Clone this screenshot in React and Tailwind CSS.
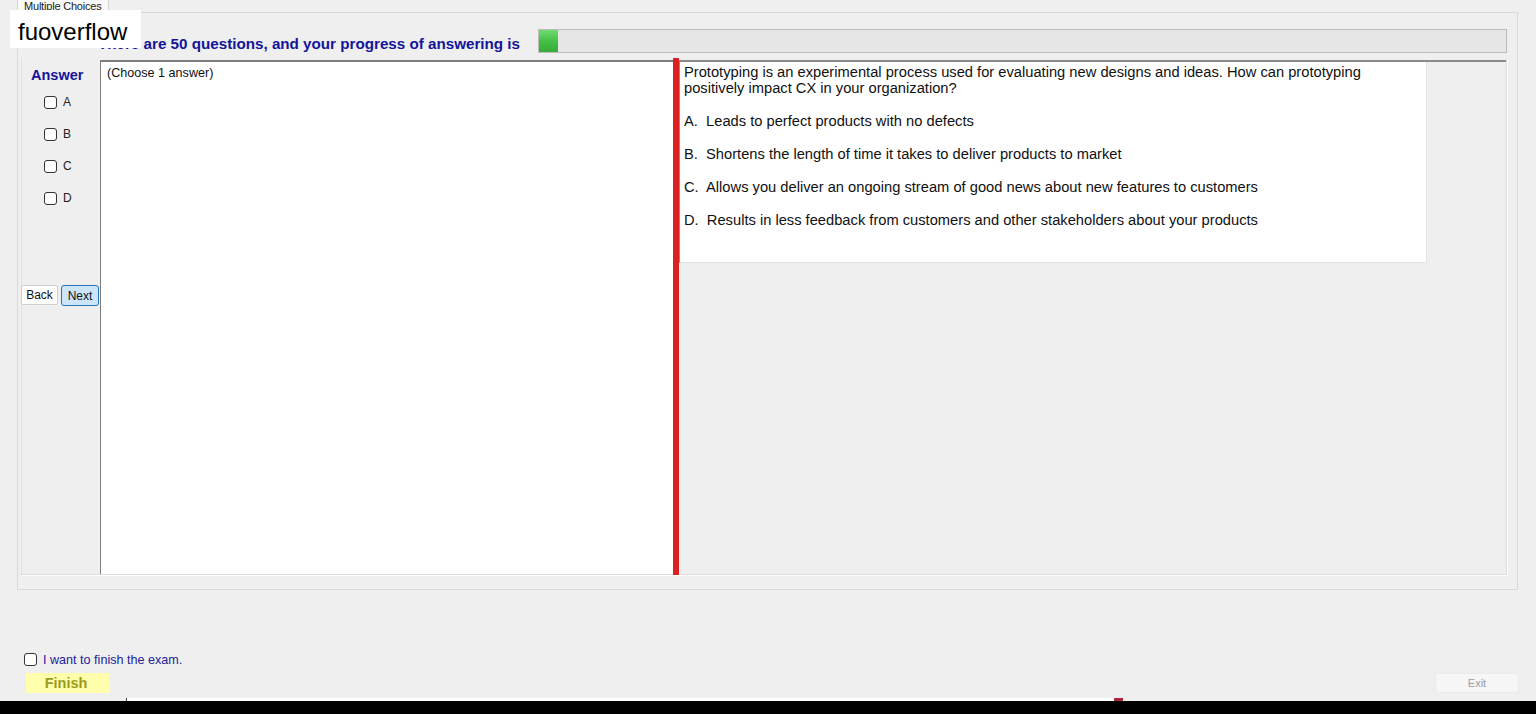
import React from "react";

const sans = { fontFamily: '"Liberation Sans", Arial, sans-serif' };

function Box({ className = "" }) {
  return (
    <div
      className={
        "w-[13px] h-[13px] shrink-0 rounded-[3px] border border-[#333333] bg-white " +
        className
      }
    />
  );
}

const options = [
  "A.  Leads to perfect products with no defects",
  "B.  Shortens the length of time it takes to deliver products to market",
  "C.  Allows you deliver an ongoing stream of good news about new features to customers",
  "D.  Results in less feedback from customers and other stakeholders about your products",
];

export default function App() {
  return (
    <div
      className="relative w-[1536px] h-[714px] overflow-hidden bg-[#efefef] flex flex-col text-black"
      style={sans}
    >
      {/* tab strip */}
      <div className="h-[12px] flex pl-[17px]">
        <div className="w-[92px] h-[13px] bg-[#f9f9f9] border border-t-0 border-b-0 border-[#d4d4d4] text-[11px] leading-[12px] text-[#222] pl-[6px] tracking-[-0.2px] whitespace-nowrap">
          Multiple Choices
        </div>
      </div>

      {/* tab page */}
      <div className="ml-[17px] w-[1501px] h-[578px] border border-[#d9d9d9] flex flex-col">
        {/* progress header */}
        <div className="mt-[16px] h-[24px] flex items-center">
          <div className="pl-[80px] w-[520px] text-[15.2px] font-bold text-[#14149a] pt-[6px] leading-[16px] whitespace-nowrap">
            There are 50 questions, and your progress of answering is
          </div>
          <div className="w-[969px] h-[24px] border border-[#bcbcbc] bg-[#e6e6e6] flex">
            <div className="w-[19px] h-full bg-gradient-to-b from-[#6fdc6f] via-[#45bf45] to-[#37ad37]" />
          </div>
        </div>

        {/* question frame */}
        <div className="mt-[5px] ml-[3px] w-[1486px] h-[517px] flex border-r border-b border-[#dcdcdc] shadow-[1px_1px_0_#ffffff]">
          {/* answer column */}
          <div className="w-[79px] shrink-0 flex flex-col border-l border-[#e2e2e2]">
            <div className="pl-[9px] pt-[9px] text-[14.5px] leading-[16px] font-bold text-[#14149a]">
              Answer
            </div>
            <div className="mt-[13px] pl-[22px] flex flex-col">
              {["A", "B", "C", "D"].map((l) => (
                <div key={l} className="h-[32px] flex items-start gap-[6px]">
                  <Box />
                  <span className="text-[12px] leading-[13px] text-[#222]">{l}</span>
                </div>
              ))}
            </div>
            <div className="mt-[61px] flex gap-[3px] -ml-[1px]">
              <div className="w-[37px] h-[20px] bg-white border border-[#d0d0d0] rounded-[2px] text-[12px] flex items-center justify-center text-[#111]">
                Back
              </div>
              <div className="w-[38px] h-[21px] bg-[#cde5f8] border border-[#2c73b8] rounded-[3px] text-[12px] flex items-center justify-center text-[#111]">
                Next
              </div>
            </div>
          </div>

          {/* choose panel */}
          <div className="mt-[2px] w-[573px] h-[514px] bg-white border-l border-t-2 border-[#7c7c7c] pl-[6px] pt-[4px] text-[12.6px] leading-[14px] text-[#111]">
            (Choose 1 answer)
          </div>

          {/* splitter */}
          <div className="w-[6px] h-[517px] bg-[#dc1f1f]" />

          {/* question panel */}
          <div className="mt-[2px] flex-1 border-t-2 border-[#8a8a8a] flex flex-col">
            <div className="w-[748px] h-[201px] bg-white border-l border-[#8a8a8a] border-r border-b border-r-[#e4e4e4] border-b-[#e4e4e4] pl-[4px] pt-[2px] text-[14.7px] leading-[16.5px] text-[#111]">
              <div className="leading-[16px]">
                Prototyping is an experimental process used for evaluating new designs and ideas. How can prototyping
                <br />
                positively impact CX in your organization?
              </div>
              {options.map((o) => (
                <div key={o} className="mt-[16.5px] whitespace-pre">
                  {o}
                </div>
              ))}
            </div>
          </div>
        </div>
      </div>

      {/* finish area */}
      <div className="mt-[61px] pl-[24px] flex items-center gap-[6px]">
        <Box />
        <span className="text-[12.6px] leading-[14px] text-[#22229a] pt-[2px]">I want to finish the exam.</span>
      </div>
      <div className="mt-[6px] flex justify-between pl-[26px] pr-[17px]">
        <div className="w-[83px] h-[20px] bg-[#ffffac] flex items-center justify-center text-[14.5px] font-bold text-[#9c9c1c] pt-[2px] pr-[3px]">
          Finish
        </div>
        <div className="w-[84px] h-[20px] bg-[#f6f6f6] border border-[#ebebeb] rounded-[3px] flex items-center justify-center text-[11px] text-[#9c9c9c]">
          Exit
        </div>
      </div>

      {/* bottom bar */}
      <div className="mt-auto h-[16px] flex flex-col">
        <div className="h-[3px] flex">
          <div className="w-[126px]" />
          <div className="w-[1px] bg-[#444]" />
          <div className="w-[987px] bg-white" />
          <div className="w-[9px] bg-[#b0243e]" />
        </div>
        <div className="flex-1 bg-black" />
      </div>

      {/* watermark */}
      <div className="absolute left-[10px] top-[10px] w-[131px] h-[38px] bg-white flex items-center pl-[8px] pt-[5px] text-[24px] text-black">
        fuoverflow
      </div>
    </div>
  );
}
